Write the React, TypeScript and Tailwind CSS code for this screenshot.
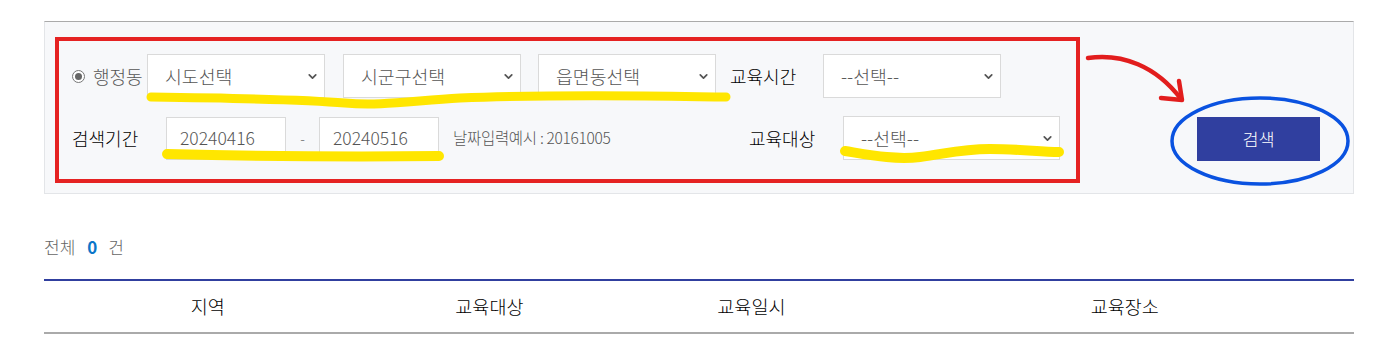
import { ChevronDown } from "lucide-react";

function SelectBox({ label, className }: { label: string; className: string }) {
  return (
    <div
      className={`flex h-[44px] shrink-0 items-center justify-between border border-[#dadada] bg-white pl-[17px] pr-[5px] text-[18.3px] leading-none text-[#555] ${className}`}
    >
      <span>{label}</span>
      <ChevronDown size={13} strokeWidth={3.2} className="text-[#555]" />
    </div>
  );
}

function DateInput({ value }: { value: string }) {
  return (
    <div className="flex h-[43px] w-[120px] shrink-0 items-center border border-[#dadada] bg-white pl-[13px] text-[17.5px] leading-none text-[#555]">
      {value}
    </div>
  );
}

// annotation marks drawn on top of the screenshot
function Annotations() {
  return (
    <svg
      className="pointer-events-none absolute left-0 top-0"
      width={1385}
      height={352}
      viewBox="0 0 1385 352"
      fill="none"
    >
      <g stroke="#ffe600" strokeLinecap="round" strokeLinejoin="round">
        <path d="M151 97 C 230 98, 300 99, 345 103 C 380 106, 410 101, 460 98 C 560 94, 650 96, 726 97" strokeWidth={9} />
        <path d="M167 154 C 250 156, 350 157, 439 156" strokeWidth={10} />
        <path d="M845 151 C 870 155, 895 160, 920 157 C 945 154, 960 149, 990 149 C 1020 149, 1040 152, 1059 152" strokeWidth={10} />
      </g>
      <g stroke="#e21d1d" strokeWidth={4.5} strokeLinecap="round" strokeLinejoin="round">
        <path d="M1088 58 C 1122 53, 1156 66, 1181 99" />
        <path d="M1179 81 L1182 100 L1161 98" />
      </g>
      <ellipse cx={1260} cy={141} rx={88} ry={43} stroke="#0a52e0" strokeWidth={3.5} />
    </svg>
  );
}

export default function App() {
  return (
    <div className="relative h-[352px] w-[1385px] overflow-hidden bg-white font-['Noto_Sans_CJK_KR','Liberation_Sans',sans-serif] font-light">
      <div className="pl-[44px] pr-[31px] pt-[21px]">
        {/* search panel */}
        <div className="flex h-[173px] border border-[#e3e5e8] border-t-[#aaaaaa] bg-[#f7f8fa] pl-[10px] pt-[15px]">
          <div className="flex h-[146px] w-[1025px] shrink-0 flex-col border-4 border-[#e52222] pl-[13px] pt-[13px]">
            <div className="flex h-[44px] items-center">
              <span className="flex h-[13px] w-[13px] items-center justify-center rounded-full border-[1.5px] border-[#777] bg-white">
                <span className="h-[7px] w-[7px] rounded-full bg-[#666]" />
              </span>
              <span className="ml-[8px] w-[49px] whitespace-nowrap text-[18px] leading-none text-[#555]">행정동</span>
              <SelectBox label="시도선택" className="ml-[5px] w-[178px]" />
              <SelectBox label="시군구선택" className="ml-[18px] w-[178px]" />
              <SelectBox label="읍면동선택" className="ml-[17px] w-[178px]" />
              <span className="ml-[14px] w-[66px] whitespace-nowrap text-[18px] leading-none text-black">교육시간</span>
              <SelectBox label="--선택--" className="ml-[27px] w-[178px]" />
            </div>
            <div className="mt-[18px] flex h-[44px] items-center">
              <span className="w-[66px] whitespace-nowrap text-[18px] leading-none text-black">검색기간</span>
              <div className="ml-[28px]">
                <DateInput value="20240416" />
              </div>
              <span className="w-[33px] text-center text-[14px] leading-none text-[#666]">-</span>
              <DateInput value="20240516" />
              <span className="ml-[14px] w-[159px] whitespace-nowrap text-[15.5px] leading-none tracking-[-0.3px] text-[#555]">
                날짜입력예시 : 20161005
              </span>
              <span className="ml-[137px] w-[66px] whitespace-nowrap text-[18px] leading-none text-black">교육대상</span>
              <SelectBox label="--선택--" className="ml-[28px] w-[217px]" />
            </div>
          </div>
          <button className="mb-[32px] ml-[117px] flex h-[44px] w-[123px] items-center justify-center self-end bg-[#303f9f] text-[17.5px] leading-none text-white">
            검색
          </button>
        </div>

        {/* result count */}
        <div className="mt-[40px] flex h-[24px] items-center text-[17px] leading-none text-[#666]">
          <span>전체</span>
          <span className="ml-[12px] font-bold text-[#0b76c9]">0</span>
          <span className="ml-[11px]">건</span>
        </div>

        {/* table header */}
        <div className="mt-[21px] grid h-[55px] grid-cols-[25%_18%_22%_35%] items-center border-y-2 border-b-[#aaaaaa] border-t-[#303f9f] text-[18.5px] leading-none text-black">
          <div className="text-center">지역</div>
          <div className="text-center">교육대상</div>
          <div className="text-center">교육일시</div>
          <div className="text-center">교육장소</div>
        </div>
      </div>
      <Annotations />
    </div>
  );
}
